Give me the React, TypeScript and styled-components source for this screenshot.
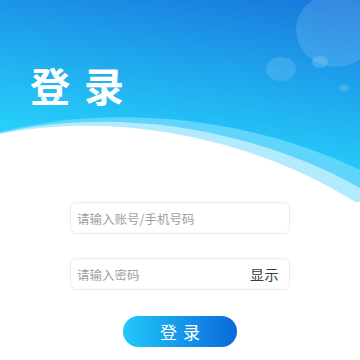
import React, { useState } from "react";
import styled, { createGlobalStyle } from "styled-components";

const GlobalStyle = createGlobalStyle`
  html, body {
    margin: 0;
    padding: 0;
    background: #fff;
    font-family: "Noto Sans CJK SC", "Noto Sans", sans-serif;
  }
  * { box-sizing: border-box; }
`;

const Page = styled.div`
  width: 360px;
  height: 360px;
  overflow: hidden;
  background: #fff;
`;

const Header = styled.div`
  position: relative;
  height: 202px;
  padding: 59px 0 0 30px;
`;

// background drawing: sky gradient, bubbles and the wave
const HeaderArt = styled.svg`
  position: absolute;
  left: 0;
  top: 0;
  width: 360px;
  height: 202px;
  z-index: 0;
`;

const Title = styled.h1`
  position: relative;
  z-index: 1;
  margin: 0;
  color: #fff;
  font-size: 40px;
  font-weight: 700;
  line-height: 52px;
  letter-spacing: 14px;
`;

const Form = styled.div`
  display: flex;
  flex-direction: column;
  align-items: center;
  gap: 24px;
`;

const Field = styled.div`
  width: 220px;
  height: 32px;
  display: flex;
  align-items: center;
  padding: 0 10px 0 6px;
  border: 1px solid #ececec;
  border-radius: 6px;
  background: #fff;
`;

const Input = styled.input`
  flex: 1;
  min-width: 0;
  border: 0;
  outline: none;
  background: transparent;
  font-family: inherit;
  font-size: 12.5px;
  color: #333;
  padding: 0;
  &::placeholder {
    color: #a0a0a0;
  }
`;

const Toggle = styled.button`
  border: 0;
  background: none;
  padding: 0;
  font-family: inherit;
  font-size: 14px;
  color: #3a3a3a;
  letter-spacing: 0.5px;
`;

const Submit = styled.button`
  margin-top: 2px;
  width: 114px;
  height: 31px;
  border: 0;
  border-radius: 16px;
  background: linear-gradient(90deg, #22c9f9 0%, #1598ea 50%, #0c69db 100%);
  color: #fff;
  font-family: inherit;
  font-size: 17px;
  letter-spacing: 6px;
  padding: 0 0 0 6px;
`;

const Wave = () => (
  <HeaderArt viewBox="0 0 360 202" preserveAspectRatio="none">
    <defs>
      <linearGradient id="sky" x1="360" y1="0" x2="330" y2="185" gradientUnits="userSpaceOnUse">
        <stop offset="0" stopColor="#1876dc" />
        <stop offset="0.5" stopColor="#1fa6ed" />
        <stop offset="1" stopColor="#27d2fb" />
      </linearGradient>
    </defs>
    <rect width="360" height="202" fill="url(#sky)" />
    <ellipse cx="336" cy="30" rx="40" ry="37" fill="#fff" fillOpacity="0.13" />
    <ellipse cx="281" cy="69" rx="15" ry="12" fill="#fff" fillOpacity="0.13" />
    <ellipse cx="320" cy="62" rx="8" ry="6" fill="#fff" fillOpacity="0.16" />
    <ellipse cx="344" cy="88" rx="5" ry="4" fill="#fff" fillOpacity="0.14" />
    <path d="M0 132 C120 101 260 121 360 170 L360 202 L0 202 Z" fill="#5fd5fc" />
    <path d="M0 133 C120 105 260 131 360 188 L360 202 L0 202 Z" fill="#b1ebfd" />
    <path d="M0 134 C120 110 260 140 360 205 L360 202 L0 202 Z" fill="#fff" />
  </HeaderArt>
);

export default function App() {
  const [show, setShow] = useState(false);
  return (
    <Page>
      <GlobalStyle />
      <Header>
        <Wave />
        <Title>登录</Title>
      </Header>
      <Form>
        <Field>
          <Input placeholder="请输入账号/手机号码" />
        </Field>
        <Field>
          <Input type={show ? "text" : "password"} placeholder="请输入密码" />
          <Toggle onClick={() => setShow((s) => !s)}>{show ? "隐藏" : "显示"}</Toggle>
        </Field>
        <Submit>登录</Submit>
      </Form>
    </Page>
  );
}
